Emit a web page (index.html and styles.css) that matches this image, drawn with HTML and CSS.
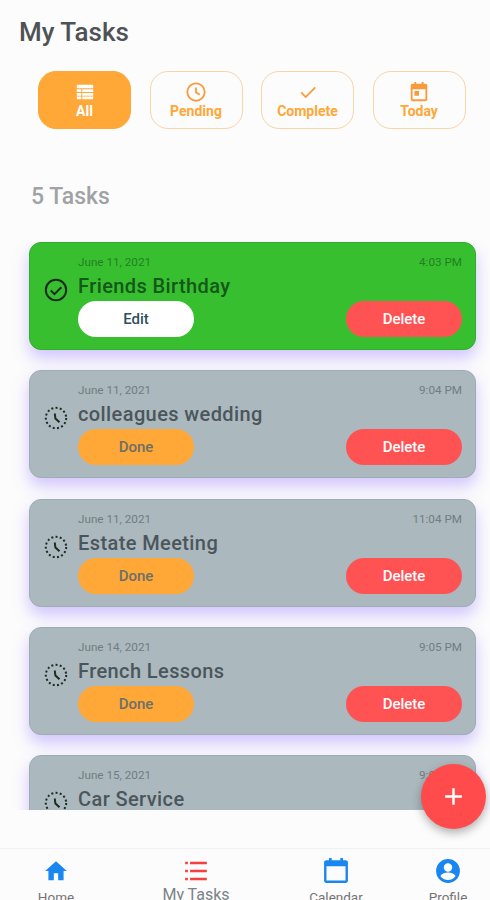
FILE: index.html
```html
<!DOCTYPE html>
<html lang="en">
<head>
<meta charset="utf-8">
<title>My Tasks</title>
<link rel="stylesheet" href="styles.css">
</head>
<body>
<svg class="defs" width="0" height="0" aria-hidden="true">
  <defs>
    <symbol id="pending" viewBox="0 0 24 24">
      <circle cx="12" cy="12" r="10.2" fill="none" stroke="currentColor" stroke-width="2" stroke-dasharray="2 2.3"/>
      <path d="M10.8 7.500l.6 5 4.100 3.800" fill="none" stroke="currentColor" stroke-width="2"/>
    </symbol>
  </defs>
</svg>
<div class="app">
  <h1 class="title">My Tasks</h1>
  <div class="chips">
    <div class="chip chip-active">
      <svg class="chip-icon" viewBox="0 0 24 24"><path fill="currentColor" d="M3 5.500C3 4.700 3.700 4 4.500 4h15c.8 0 1.500.7 1.500 1.500V8H3zM3 9h5v3H3zM9 9h12v3H9zM3 13h5v3H3zM9 13h12v3H9zM3 17h5v3H4.500C3.700 20 3 19.300 3 18.500zM9 17h12v1.500c0 .8-.7 1.500-1.500 1.500H9z"/></svg>
      <span>All</span>
    </div>
    <div class="chip">
      <svg class="chip-icon" viewBox="0 0 24 24"><path fill="none" stroke="currentColor" stroke-width="2" d="M12 2.500a9.500 9.500 0 1 0 0 19a9.500 9.500 0 0 0 0-19zM12 7v5.500l4 2.400"/></svg>
      <span>Pending</span>
    </div>
    <div class="chip">
      <svg class="chip-icon" viewBox="0 0 24 24"><path fill="none" stroke="currentColor" stroke-width="2" d="M4.500 12.500l5 5L20 7"/></svg>
      <span>Complete</span>
    </div>
    <div class="chip">
      <svg class="chip-icon" viewBox="0 0 24 24"><path fill="currentColor" d="M7 1h2v2h6V1h2v2h2c1.100 0 2 .9 2 2v15c0 1.100-.9 2-2 2H5c-1.100 0-2-.9-2-2V5c0-1.100.9-2 2-2h2zM5 9v11h14V9zM7 11h5v5H7z"/></svg>
      <span>Today</span>
    </div>
  </div>
  <h2 class="count">5 Tasks</h2>
  <div class="list">
    <article class="card card-done">
      <svg class="status" viewBox="0 0 24 24"><circle cx="12" cy="12" r="10.200" fill="none" stroke="currentColor" stroke-width="2"/><path d="M6.800 12.500l3.700 3.700 6.800-7" fill="none" stroke="currentColor" stroke-width="2"/></svg>
      <div class="card-body">
        <div class="meta"><span>June 11, 2021</span><span>4:03 PM</span></div>
        <div class="name">Friends Birthday</div>
        <div class="actions"><button class="btn btn-edit">Edit</button><button class="btn btn-delete">Delete</button></div>
      </div>
    </article>
    <article class="card">
      <svg class="status"><use href="#pending"/></svg>
      <div class="card-body">
        <div class="meta"><span>June 11, 2021</span><span>9:04 PM</span></div>
        <div class="name">colleagues wedding</div>
        <div class="actions"><button class="btn btn-done">Done</button><button class="btn btn-delete">Delete</button></div>
      </div>
    </article>
    <article class="card">
      <svg class="status"><use href="#pending"/></svg>
      <div class="card-body">
        <div class="meta"><span>June 11, 2021</span><span>11:04 PM</span></div>
        <div class="name">Estate Meeting</div>
        <div class="actions"><button class="btn btn-done">Done</button><button class="btn btn-delete">Delete</button></div>
      </div>
    </article>
    <article class="card">
      <svg class="status"><use href="#pending"/></svg>
      <div class="card-body">
        <div class="meta"><span>June 14, 2021</span><span>9:05 PM</span></div>
        <div class="name">French Lessons</div>
        <div class="actions"><button class="btn btn-done">Done</button><button class="btn btn-delete">Delete</button></div>
      </div>
    </article>
    <article class="card">
      <svg class="status"><use href="#pending"/></svg>
      <div class="card-body">
        <div class="meta"><span>June 15, 2021</span><span>9:05 PM</span></div>
        <div class="name">Car Service</div>
      </div>
    </article>
  </div>
  <nav class="nav">
    <div class="nav-item">
      <svg class="nav-icon nav-blue" viewBox="0 0 24 24"><path fill="currentColor" d="M10 20.500v-6.500h4v6.500h5v-8.500h3L12 3 2 12h3v8.500z"/></svg>
      <span>Home</span>
    </div>
    <div class="nav-item nav-item-active">
      <svg class="nav-icon nav-red" viewBox="0 0 24 24"><path fill="currentColor" d="M2 3.500h2.500v2.200H2zM6.500 3.500H22v2.200H6.500zM2 10.900h2.500v2.200H2zM6.500 10.900H22v2.200H6.500zM2 18.300h2.500v2.200H2zM6.500 18.300H22v2.200H6.500z"/></svg>
      <span>My Tasks</span>
    </div>
    <div class="nav-item">
      <svg class="nav-icon nav-blue" viewBox="0 0 24 24"><path fill="currentColor" d="M5.500 0h2.500v2h8V0h2.500v2H21c1.100 0 2 .9 2 2v17c0 1.100-.9 2-2 2H3c-1.100 0-2-.9-2-2V4c0-1.100.9-2 2-2h2.500zM3.200 7.500v13.300h17.600V7.500z"/></svg>
      <span>Calendar</span>
    </div>
    <div class="nav-item">
      <svg class="nav-icon nav-blue" viewBox="0 0 24 24"><path fill="currentColor" fill-rule="evenodd" d="M12 1a11 11 0 1 0 0 22a11 11 0 0 0 0-22zM12 4.800a3.900 3.900 0 1 1 0 7.800a3.900 3.900 0 0 1 0-7.800zM12 20.400c-2.900 0-5.400-1.400-6.900-3.600c.1-2.300 4.600-3.500 6.900-3.500s6.800 1.200 6.900 3.500c-1.500 2.200-4 3.600-6.900 3.600z"/></svg>
      <span>Profile</span>
    </div>
  </nav>
  <button class="fab" aria-label="Add task"><svg viewBox="0 0 24 24"><path fill="none" stroke="currentColor" stroke-width="2.400" d="M12 4v16M4 12h16"/></svg></button>
</div>
</body>
</html>
```

FILE: styles.css
```css
* {
  box-sizing: border-box;
}

html,
body {
  margin: 0;
  height: 100%;
  overflow: hidden;
}

body {
  background: #fcfcfc;
  font-family: Roboto, "Noto Sans", sans-serif;
  color: #4a4f52;
}

.defs {
  position: absolute;
}

.app {
  position: relative;
  height: 900px;
  display: flex;
  flex-direction: column;
  overflow: hidden;
}

.title {
  margin: 0;
  padding: 17px 0 0 19px;
  height: 71px;
  flex: none;
  font-size: 26px;
  line-height: 30px;
  font-weight: 500;
  color: #4f5255;
}

.chips {
  display: flex;
  gap: 18.500px;
  padding-left: 38px;
  height: 58px;
  flex: none;
}

.chip {
  width: 93px;
  height: 58px;
  border: 1.500px solid #fbd3a5;
  border-radius: 18px;
  color: #ffa737;
  font-size: 14px;
  line-height: 16px;
  font-weight: 700;
  display: flex;
  flex-direction: column;
  align-items: center;
  padding-top: 8.500px;
}

.chip-active {
  background: #ffa737;
  border-color: #ffa737;
  color: #fff;
}

.chip-icon {
  width: 22px;
  height: 22px;
  color: #f99b3a;
}

.chip-active .chip-icon {
  color: #fff;
}

.count {
  margin: 0;
  padding: 54px 0 0 31px;
  height: 113px;
  flex: none;
  font-size: 23px;
  line-height: 28px;
  font-weight: 500;
  color: #a0a3a6;
}

.list {
  height: 568px;
  flex: none;
  overflow: hidden;
  display: flex;
  flex-direction: column;
  gap: 20.250px;
  padding: 0 14px 30px 29px;
}

.card {
  flex: none;
  height: 108px;
  display: flex;
  align-items: flex-start;
  padding: 12px 13px 0 14px;
  background: #abb8bd;
  border: 1px solid #9fadb3;
  border-radius: 12px;
  box-shadow: 0 8px 16px rgba(124, 92, 255, 0.34);
  color: #4b565c;
}

.card-done {
  background: #38bf2f;
  border-color: #2fae29;
  color: #14571a;
}

.status {
  flex: none;
  width: 24px;
  height: 24px;
  margin-top: 23px;
  margin-right: 10px;
  color: #1d2b22;
}

.card-body {
  flex: 1;
  min-width: 0;
}

.meta {
  display: flex;
  justify-content: space-between;
  height: 15px;
  font-size: 11.700px;
  line-height: 15px;
  opacity: 0.6;
}

.name {
  height: 31px;
  font-size: 20px;
  line-height: 32px;
  font-weight: 500;
  letter-spacing: 0.4px;
}

.actions {
  display: flex;
  justify-content: space-between;
}

.btn {
  width: 116px;
  height: 36px;
  padding: 0;
  border: 0;
  border-radius: 18px;
  font-family: inherit;
  font-size: 15px;
  font-weight: 500;
}

.btn-edit {
  background: #fff;
  color: #2f4f60;
}

.btn-done {
  background: #ffa737;
  color: #6c7069;
}

.btn-delete {
  background: #ff5252;
  color: #fff;
}

.nav {
  flex: none;
  height: 52px;
  margin-top: 38px;
  border-top: 1px solid #f1f1f1;
  display: grid;
  grid-template-columns: 112px 168px 112px 112px;
  padding-top: 9px;
  background: #fcfcfc;
}

.nav-item {
  display: flex;
  flex-direction: column;
  align-items: center;
  font-size: 13.500px;
  line-height: 16px;
  color: #787373;
}

.nav-item-active {
  font-size: 16px;
  line-height: 18px;
  color: #7a8388;
}

.nav-icon {
  flex: none;
  width: 26px;
  height: 26px;
  margin-bottom: 5px;
}

.nav-item-active .nav-icon {
  margin-bottom: 2px;
}

.nav-blue {
  color: #1a87f0;
}

.nav-red {
  color: #f4403f;
}

.fab {
  position: absolute;
  left: 421px;
  top: 764px;
  width: 65px;
  height: 65px;
  padding: 20px;
  border: 0;
  border-radius: 50%;
  background: #ff4b4b;
  color: #fff;
  box-shadow: 0 4px 10px rgba(0, 0, 0, 0.3);
}

.fab svg {
  display: block;
  width: 100%;
  height: 100%;
}
```
